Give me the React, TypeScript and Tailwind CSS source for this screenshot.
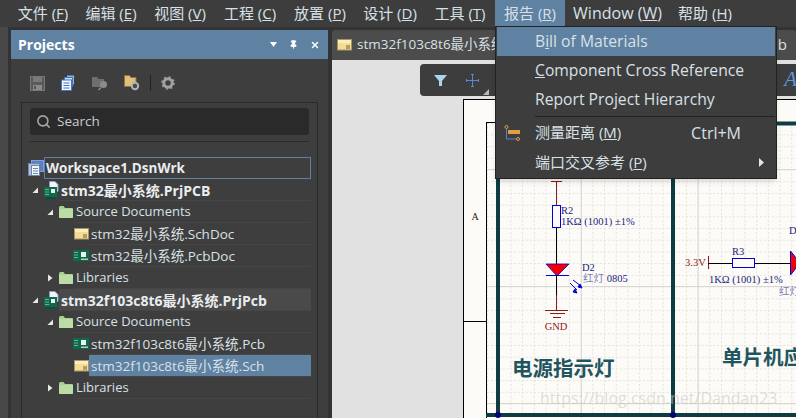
import React from "react";
import { Pin, Search, X } from "lucide-react";

const menus = [
  { label: "文件", key: "F", cls: "w-[68px]" },
  { label: "编辑", key: "E", cls: "w-[68px]" },
  { label: "视图", key: "V", cls: "w-[70px]" },
  { label: "工程", key: "C", cls: "w-[70px]" },
  { label: "放置", key: "P", cls: "w-[70px]" },
  { label: "设计", key: "D", cls: "w-[70px]" },
  { label: "工具", key: "T", cls: "w-[70px]" },
  { label: "报告", key: "R", cls: "w-[70px] bg-[#5f82a3]" },
  { label: "Window", key: "W", cls: "w-[105px] text-[16px]" },
  { label: "帮助", key: "H", cls: "w-[70px]" },
];

function SaveIcon() {
  return (
    <svg width="15" height="15" viewBox="0 0 15 15">
      <rect x="0.5" y="0.5" width="14" height="14" fill="#5a5a5a" stroke="#777" />
      <rect x="3" y="1" width="9" height="5" fill="#7a7a7a" />
      <rect x="3" y="9" width="9" height="5" fill="#8a8a8a" />
      <rect x="4" y="10" width="2" height="3" fill="#555" />
    </svg>
  );
}

function CopyIcon() {
  return (
    <svg width="15" height="16" viewBox="0 0 15 16">
      <rect x="6" y="0.5" width="7" height="9" fill="#8fb4e6" />
      <rect x="3.5" y="2.5" width="8" height="9" fill="#c9dcf4" stroke="#3f76c4" />
      <rect x="0.5" y="5" width="10" height="10.5" fill="#f4f7fb" stroke="#3f76c4" />
      <path d="M2.5 8h6M2.5 10.5h6M2.5 13h6" stroke="#3f76c4" />
    </svg>
  );
}

function FolderSearchIcon() {
  return (
    <svg width="16" height="15" viewBox="0 0 16 15">
      <path d="M0 1h5l1.5 2H12v8H0z" fill="#6f6f6f" />
      <circle cx="11.5" cy="8.500" r="3.500" fill="#8c8c8c" />
      <path d="M9 11.500l-2.500 2.500" stroke="#8c8c8c" strokeWidth="1.500" />
    </svg>
  );
}

function FolderGearIcon() {
  return (
    <svg width="16" height="16" viewBox="0 0 16 16">
      <path d="M0.5 0.5h5l1.5 2h5v9h-11.500z" fill="#e2bf78" stroke="#8d7440" />
      <circle cx="11" cy="11" r="3.200" fill="#4a4a4a" stroke="#aab4bb" strokeWidth="2" />
    </svg>
  );
}

function GearIcon() {
  return (
    <svg width="14" height="14" viewBox="0 0 14 14">
      <circle cx="7" cy="7" r="4.200" fill="none" stroke="#a1a1a1" strokeWidth="3" />
      <circle cx="7" cy="7" r="6" fill="none" stroke="#a1a1a1" strokeWidth="1.600" strokeDasharray="2 2.700" />
    </svg>
  );
}

function WorkspaceIcon() {
  return (
    <svg width="16" height="16" viewBox="0 0 16 16">
      <rect x="3.500" y="0.500" width="12" height="11" fill="#5c7fc4" stroke="#7f9fe0" />
      <rect x="0.500" y="3.500" width="11" height="12" fill="#b4c2da" stroke="#6d84ad" />
      <rect x="3.500" y="5.500" width="8" height="10" fill="#f2f4f8" stroke="#6d84ad" />
      <path d="M5 8.500h5M5 11h5M5 13.500h5" stroke="#6d84ad" />
    </svg>
  );
}

function SchIcon() {
  return (
    <svg width="15" height="12" viewBox="0 0 15 12">
      <rect x="0.500" y="0.500" width="14" height="10.500" fill="#f4dc92" stroke="#a8946a" />
      <rect x="1" y="1" width="13" height="3" fill="#fbeebc" />
      <path d="M9 7h4M9 9h4" stroke="#6d5f3c" />
    </svg>
  );
}

function PcbIcon() {
  return (
    <svg width="16" height="12" viewBox="0 0 16 12">
      <rect x="0" y="0" width="16" height="11" fill="#0d6a4a" />
      <path d="M1.500 2.500h4M1.500 5h4M1.500 7.500h4" stroke="#d5efe4" strokeDasharray="1 1" />
      <rect x="8" y="2" width="5" height="5" fill="#e9f4ee" />
      <rect x="8" y="8.500" width="7" height="1.500" fill="#a8d6c2" />
    </svg>
  );
}

function ProjectIcon() {
  return (
    <svg width="15" height="18" viewBox="0 0 15 18">
      <path d="M5.500 0.500h5.500l3 3v7h-8.500z" fill="#f1f4fa" stroke="#8c9cb8" />
      <rect x="0" y="6" width="13" height="10" fill="#0d6a4a" />
      <path d="M1.500 8.500h3M1.500 11h3M1.500 13.500h3" stroke="#d5efe4" strokeDasharray="1 1" />
      <rect x="7" y="8" width="4" height="4" fill="#e9f4ee" />
      <rect x="2" y="16" width="9" height="2" fill="#0a4f38" />
    </svg>
  );
}

function FolderIcon() {
  return (
    <svg width="14" height="12" viewBox="0 0 14 12">
      <path d="M0 1.500Q0 0 1.500 0h3l1.500 2h7q1 0 1 1v8q0 1-1 1H1q-1 0-1-1z" fill="#a9d18e" />
      <rect x="0" y="3" width="14" height="9" rx="1" fill="#bcdca6" />
    </svg>
  );
}

function Caret({ open }: { open: boolean }) {
  return (
    <svg width="6" height="8" viewBox="0 0 6 8">
      {open ? <path d="M6 1.500V7H0.500z" fill="#e8e8e8" /> : <path d="M1 0.500L5.500 4 1 7.500z" fill="#e8e8e8" />}
    </svg>
  );
}

const rows = [
  { label: "stm32最小系统.PrjPCB", bold: true, pad: "pl-[4px]", caret: true, icon: <ProjectIcon />, cls: "" },
  { label: "Source Documents", latin: true, pad: "pl-[19px]", caret: true, icon: <FolderIcon />, cls: "" },
  { label: "stm32最小系统.SchDoc", pad: "pl-[45px]", icon: <SchIcon />, cls: "" },
  { label: "stm32最小系统.PcbDoc", pad: "pl-[45px]", icon: <PcbIcon />, cls: "" },
  { label: "Libraries", latin: true, pad: "pl-[19px]", caret: false, icon: <FolderIcon />, cls: "" },
  { label: "stm32f103c8t6最小系统.PrjPcb", bold: true, pad: "pl-[4px]", caret: true, icon: <ProjectIcon />, cls: "bg-[#4a4a4a]" },
  { label: "Source Documents", latin: true, pad: "pl-[19px]", caret: true, icon: <FolderIcon />, cls: "" },
  { label: "stm32f103c8t6最小系统.Pcb", pad: "pl-[45px]", icon: <PcbIcon />, cls: "" },
  { label: "stm32f103c8t6最小系统.Sch", pad: "pl-[45px]", icon: <SchIcon />, cls: "bg-[#5f82a3]" },
  { label: "Libraries", latin: true, pad: "pl-[19px]", caret: false, icon: <FolderIcon />, cls: "" },
];

function TreeRow({ row }: { row: (typeof rows)[number] }) {
  return (
    <div className={`flex h-[22px] items-center ${row.pad}`}>
      <div className="flex items-center gap-[5px]">
        {row.caret !== undefined && <Caret open={row.caret} />}
        <span className="flex w-[16px] justify-center">{row.icon}</span>
      </div>
      <div
        className={`flex h-full flex-1 items-center border-b border-[#464646] pl-[2px] pt-px ${row.cls} ${
          row.bold ? "text-[14px] font-bold text-[#e9edf0]" : "text-[#d9e0e6]"
        } ${row.latin ? "text-[13px]" : ""}`}
      >
        {row.label}
      </div>
    </div>
  );
}

function Schematic() {
  return (
    <svg className="h-full w-full" viewBox="332 60 464 358">
      <defs>
        <pattern id="minor" x="487" y="111" width="11.700" height="11.700" patternUnits="userSpaceOnUse">
          <path d="M0.500 0V11.700M0 0.500H11.700" stroke="#e3e1da" strokeDasharray="2 2" fill="none" />
        </pattern>
        <pattern id="major" x="464" y="52" width="116.800" height="117" patternUnits="userSpaceOnUse">
          <path d="M0.500 0V117M0 0.500H117" stroke="#d6d6d2" fill="none" />
        </pattern>
      </defs>
      <rect x="332" y="60" width="464" height="358" fill="#e1e1e1" />
      <rect x="463.500" y="99.500" width="340" height="330" fill="#fdfbf7" stroke="#000" />
      <rect x="487" y="123" width="310" height="295" fill="url(#minor)" />
      <rect x="487" y="123" width="310" height="295" fill="url(#major)" />
      <path d="M486.500 122V418M486 122.500H796M464 321.500H486" stroke="#000" fill="none" />
      <path d="M498 123V415M486 415H796M673 123V415M498 123.500H796" stroke="#0f3b43" strokeWidth="4" fill="none" />
      <circle cx="498" cy="415" r="3" fill="#000080" />
      <circle cx="673" cy="415" r="3" fill="#000080" />
      <text x="475" y="220" fontSize="10" textAnchor="middle" fill="#222" fontFamily="'Liberation Serif', serif">A</text>

      <path d="M551 181.500H562M556.500 181V205M556.500 295V310" stroke="#8b1a1a" fill="none" />
      <path d="M556.500 227V264M556.500 275V295" stroke="#000" fill="none" />
      <rect x="552.500" y="205.500" width="8" height="22" fill="#fdfbf7" stroke="#0000d8" />
      <path d="M546 264H569L557 276z" fill="#f50000" stroke="#0000d8" strokeWidth="0.800" />
      <path d="M546 275.500H569" stroke="#0000d8" />
      <path d="M573 280l8 6M570 283l7 7" stroke="#0000d8" />
      <path d="M582 288l-4-1 2-3zM577 293l-4-1 2-3z" fill="#0000d8" stroke="#0000d8" />
      <path d="M545 310.500H568M550 313.500H565M553 317.500H561" stroke="#8b1a1a" fill="none" />
      <g fontFamily="'Liberation Serif', 'Noto Sans CJK SC', serif" fontSize="10.500" fill="#1c1c80">
        <text x="561" y="214">R2</text>
        <text x="561" y="225">1KΩ (1001) ±1%</text>
        <text x="582" y="271">D2</text>
        <text x="583" y="282" fill="#8080b8">
          红灯<tspan fill="#1c1c80"> 0805</tspan>
        </text>
        <text x="556" y="330" textAnchor="middle" fill="#8b1a1a">GND</text>
        <text x="685" y="266" fill="#8b1a1a">3.3V</text>
        <text x="732" y="255">R3</text>
        <text x="709" y="283">1KΩ (1001) ±1%</text>
        <text x="789" y="234">D</text>
        <text x="779" y="295" fill="#8080b8">红灯</text>
      </g>
      <path d="M708.500 256V269" stroke="#8b1a1a" />
      <path d="M708 263.500H732M755 263.500H790" stroke="#000" />
      <rect x="732.500" y="258.500" width="22" height="9" fill="#fdfbf7" stroke="#0000d8" />
      <path d="M790.500 251L800 263 790.500 275z" fill="#f50000" stroke="#0000d8" />
      <g fontFamily="'Liberation Serif', 'Noto Sans CJK SC', serif" fontSize="20.500" fontWeight="700" fill="#1f5560">
        <text x="512" y="376">电源指示灯</text>
        <text x="722" y="365">单片机应</text>
      </g>
      <text x="540" y="404" fontSize="16" fontFamily="'Open Sans', sans-serif" fill="#c9c9c7" fillOpacity="0.600">
        https://blog.csdn.net/Dandan23
      </text>
    </svg>
  );
}

export default function App() {
  return (
    <div className="relative flex h-[418px] w-[796px] flex-col overflow-hidden bg-[#333333] font-['Open_Sans','Noto_Sans_CJK_SC',sans-serif] text-[13.500px] text-[#d9e0e6]">
      <div className="flex h-[27px] items-center bg-[#3d3d3d] pl-[9px] text-[15px]">
        {menus.map((m) => (
          <div key={m.key} className={`flex h-full items-center justify-center whitespace-nowrap pb-px ${m.cls}`}>
            {m.label} (<span className="underline">{m.key}</span>)
          </div>
        ))}
      </div>

      <div className="flex flex-1 pt-[3px]">
        <div className="mt-[-3px] w-[8px] bg-[#484848]" />
        <div className="w-[3px]" />

        {/* projects panel */}
        <div className="flex w-[317px] flex-col bg-[#3e3e3e]">
          <div className="flex h-[29px] items-center justify-between bg-[#5f82a3] pl-[7px] pr-[8px] text-[14px] font-bold text-white">
            <span>Projects</span>
            <div className="flex items-center gap-[12px]">
              <svg width="7" height="5" viewBox="0 0 7 5">
                <path d="M0 0H7L3.500 5z" fill="#fff" />
              </svg>
              <Pin size={9} fill="#fff" strokeWidth={2.500} />
              <X size={10} strokeWidth={3.500} />
            </div>
          </div>
          <div className="flex h-[43px] items-center pl-[19px] pt-[5px]">
            <div className="flex items-center gap-[16px]">
              <SaveIcon />
              <CopyIcon />
              <FolderSearchIcon />
              <FolderGearIcon />
            </div>
            <div className="mx-[10px] h-[16px] w-px bg-[#222]" />
            <GearIcon />
          </div>
          <div className="mx-[10px] flex-1 border-x border-t border-[#2a2a2a]">
            <div className="mx-[8px] border-b border-[#2a2a2a] pb-[6px] pt-[5px]">
              <div className="flex h-[27px] items-center gap-[6px] rounded-[3px] bg-[#2a2a2a] pl-[6px] text-[#c7cdd2]">
                <Search size={15} strokeWidth={2.500} className="text-[#a5a5a5]" />
                <span>Search</span>
              </div>
            </div>
            <div className="ml-[6px] mr-[6px] pt-[15px]">
              <div className="flex h-[22px] items-center">
                <WorkspaceIcon />
                <div className="flex h-full flex-1 items-center border border-[#5f82a3] pl-[1px] font-bold text-[#e9edf0]">
                  Workspace1.DsnWrk
                </div>
              </div>
              {rows.map((row, i) => (
                <TreeRow key={i} row={row} />
              ))}
            </div>
          </div>
        </div>

        {/* editor area */}
        <div className="ml-[4px] flex flex-1 flex-col">
          <div className="flex h-[30px] shrink-0 items-center rounded-t-[3px] bg-[#4c4c4c] pl-[5px] pb-px">
            <SchIcon />
            <span className="ml-[5px] whitespace-nowrap">stm32f103c8t6最小系统.Sch</span>
            <span className="ml-auto pr-[9px] text-[15px]">ib</span>
          </div>
          <div className="relative flex-1 overflow-hidden">
            <Schematic />
            <div className="absolute left-[88px] top-[4px] flex h-[32px] w-[376px] items-center rounded-l-[4px] bg-[#3d3d3d] pl-[14px]">
              <svg width="13" height="11" viewBox="0 0 13 11">
                <path d="M0 0H13L8 6V11H5V6z" fill="#a9d4ee" />
              </svg>
              <svg className="ml-[19px]" width="13" height="13" viewBox="0 0 13 13">
                <path d="M6.500 0V13M0 6.500H13M5 0.500H8M5 12.500H8M0.500 5V8M12.500 5V8" stroke="#5f86d6" />
              </svg>
              <svg className="ml-[4px] mt-[23px]" width="6" height="6" viewBox="0 0 6 6">
                <path d="M6 0V6H0z" fill="#b8b8b8" />
              </svg>
              <span className="absolute right-[-1px] top-[3px] font-['Liberation_Serif',serif] text-[21px] italic leading-[24px] text-[#5f96dc]">
                A
              </span>
            </div>
          </div>
        </div>
      </div>

      {/* report menu */}
      <div className="absolute left-[495px] top-[26px] w-[282px] border border-[#222] bg-[#3d3d3d] px-px pb-px text-[15px] shadow-md">
        <div className="flex h-[29px] items-center bg-[#5f82a3] pl-[38px] text-[15.700px]">
          <span>
            B<span className="underline">i</span>ll of Materials
          </span>
        </div>
        <div className="flex h-[29px] items-center pl-[38px] text-[15.700px]">
          <span>
            <span className="underline">C</span>omponent Cross Reference
          </span>
        </div>
        <div className="flex h-[29px] items-center pl-[38px] text-[15.700px]">Report Project Hierarchy</div>
        <div className="ml-[38px] mt-[2px] h-px bg-[#222]" />
        <div className="flex h-[31px] items-center">
          <svg className="ml-[7px] mr-[15px]" width="16" height="16" viewBox="0 0 16 16">
            <path d="M2.500 2V14H13" stroke="#5c80c8" fill="none" />
            <rect x="4" y="5" width="12" height="4" fill="#e0a040" />
            <circle cx="2.500" cy="2" r="1.500" fill="#3d3d3d" stroke="#d8a040" />
            <circle cx="14" cy="14" r="1.500" fill="#3d3d3d" stroke="#d8a040" />
          </svg>
          <span>
            测量距离 (<span className="underline">M</span>)
          </span>
          <span className="ml-auto mr-[34px] text-[16px]">Ctrl+M</span>
        </div>
        <div className="flex h-[29px] items-center pl-[38px]">
          <span>
            端口交叉参考 (<span className="underline">P</span>)
          </span>
          <svg className="ml-auto mr-[11px]" width="5" height="9" viewBox="0 0 5 9">
            <path d="M0 0L5 4.500 0 9z" fill="#e4e4e4" />
          </svg>
        </div>
      </div>
    </div>
  );
}
